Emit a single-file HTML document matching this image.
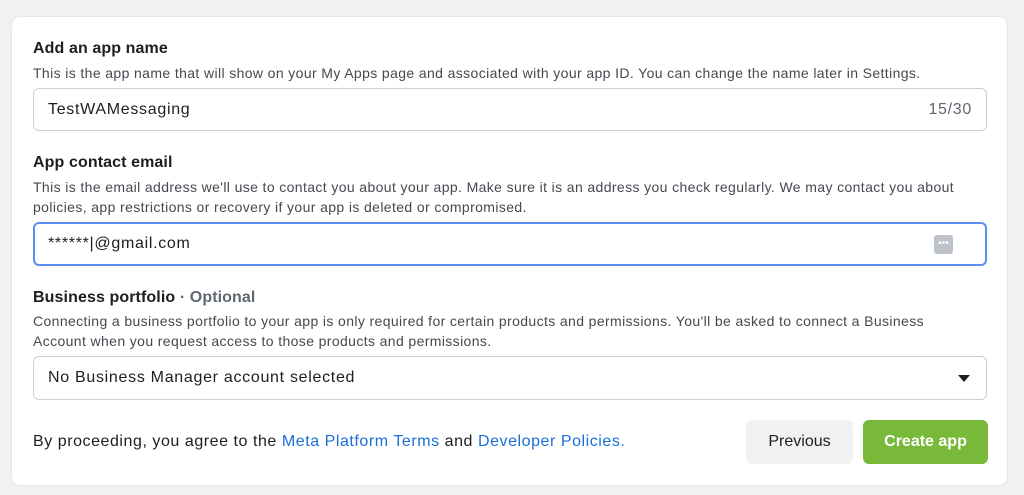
<!DOCTYPE html>
<html><head><style>
body{margin:0;background:#f0f2f2;font-family:"Liberation Sans",sans-serif;width:1024px;height:495px;overflow:hidden;position:relative}
.card{position:absolute;left:12px;top:17px;width:995px;height:468px;background:#fff;border-radius:8px;box-shadow:0 0 2px rgba(0,0,0,.12)}
.a{position:absolute;white-space:nowrap}
.h{font-size:16px;font-weight:bold;color:#1c1e21;letter-spacing:0.1px}
.d{font-size:14px;color:#444950;line-height:20px;letter-spacing:0.38px}
.in{position:absolute;left:21px;width:954px;border:1px solid #ccd0d5;border-radius:6px;box-sizing:border-box;font-size:16px;color:#1c1e21;letter-spacing:0.7px}
.btn{position:absolute;top:403px;height:44px;border-radius:6px;font-size:16px;display:flex;align-items:center;justify-content:center}
</style></head><body>
<div class="card">
<div class="a h" style="left:21px;top:23px">Add an app name</div>
<div class="a d" style="left:21px;top:46px">This is the app name that will show on your My Apps page and associated with your app ID. You can change the name later in Settings.</div>
<div class="in" style="top:71px;height:43px;"><span class="a" style="left:14px;top:12px">TestWAMessaging</span><span class="a" style="right:14px;top:12px;color:#606770">15/30</span></div>
<div class="a h" style="left:21px;top:137px">App contact email</div>
<div class="a d" style="left:21px;top:160px">This is the email address we'll use to contact you about your app. Make sure it is an address you check regularly. We may contact you about<br>policies, app restrictions or recovery if your app is deleted or compromised.</div>
<div class="in" style="top:205px;height:44px;border:2px solid #5b8def;"><span class="a" style="left:13px;top:11px">******|@gmail.com</span><span class="a" style="left:899px;top:11px;width:19px;height:19px;background:#bec3c9;border-radius:3px;color:#fff;font-size:10px;text-align:center;line-height:17px;letter-spacing:0">•••</span></div>
<div class="a h" style="left:21px;top:272px">Business portfolio <span style="color:#606770">· Optional</span></div>
<div class="a d" style="left:21px;top:294px">Connecting a business portfolio to your app is only required for certain products and permissions. You'll be asked to connect a Business<br>Account when you request access to those products and permissions.</div>
<div class="in" style="top:339px;height:44px;"><span class="a" style="left:14px;top:12px">No Business Manager account selected</span><span class="a" style="left:924px;top:18px;width:0;height:0;border-left:6px solid transparent;border-right:6px solid transparent;border-top:7px solid #1c1e21"></span></div>
<div class="a" style="left:21px;top:416px;font-size:16px;color:#1c1e21;letter-spacing:0.55px">By proceeding, you agree to the <span style="color:#1a6ed8">Meta Platform Terms</span> and <span style="color:#1a6ed8">Developer Policies.</span></div>
<div class="btn" style="left:734px;width:107px;background:#f0f2f2;color:#1c1e21">Previous</div>
<div class="btn" style="left:851px;width:125px;background:#79b93a;color:#fff;font-weight:bold">Create app</div>
</div>
</body></html>
